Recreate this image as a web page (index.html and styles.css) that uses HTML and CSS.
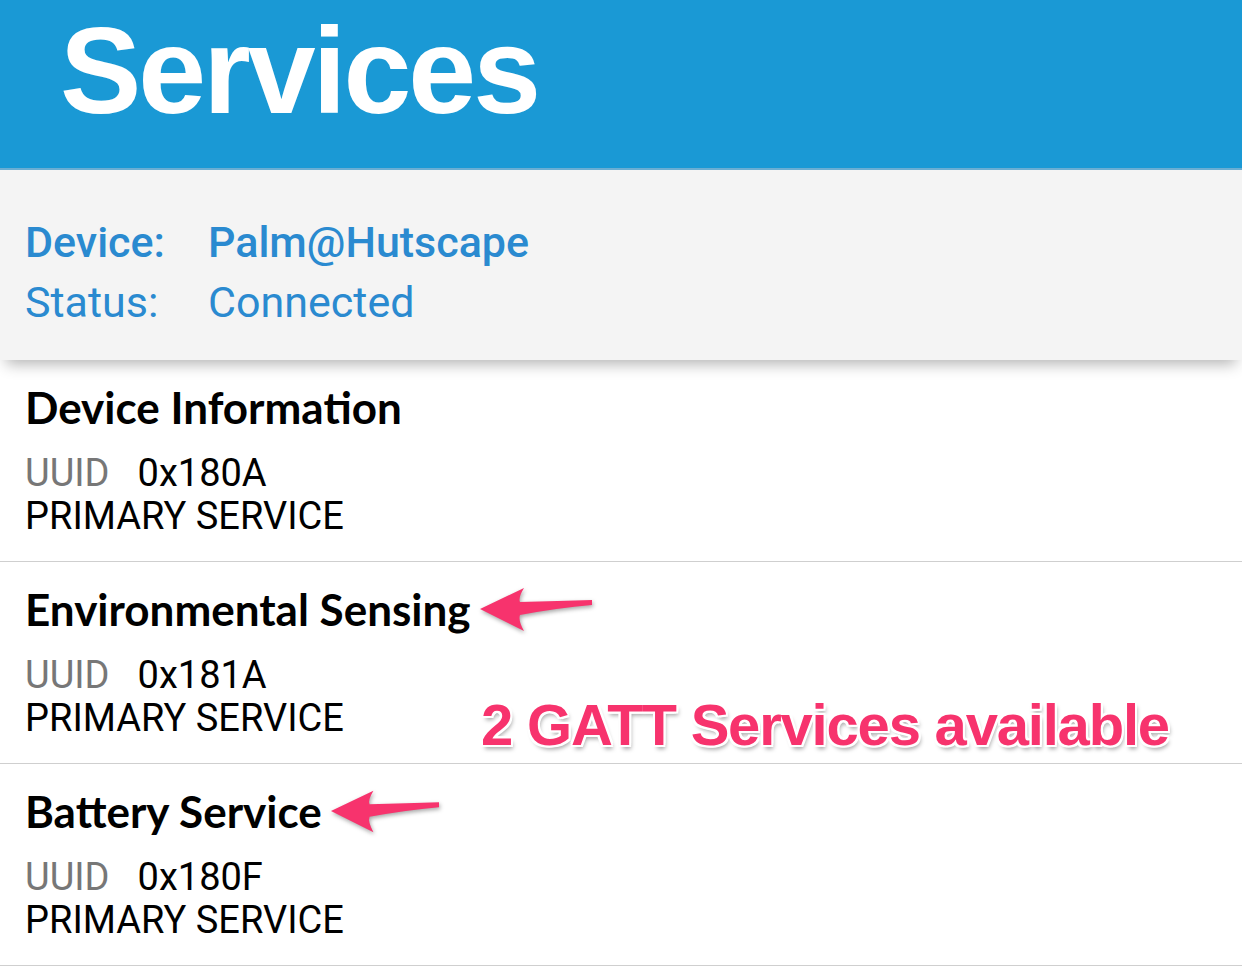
FILE: index.html
```html
<!DOCTYPE html>
<html lang="en">
<head>
<meta charset="utf-8">
<title>Services</title>
<link rel="stylesheet" href="styles.css">
</head>
<body>
<header class="appbar">
  <h1 class="appbar-title">Services</h1>
</header>
<section class="device-panel">
  <div class="device-row">
    <span class="device-label strong">Device:</span>
    <span class="device-value strong">Palm@Hutscape</span>
  </div>
  <div class="device-row">
    <span class="device-label">Status:</span>
    <span class="device-value">Connected</span>
  </div>
</section>
<ul class="services">
  <li class="service">
    <h2 class="service-name">Device Information</h2>
    <p class="service-uuid"><span class="uuid-label">UUID</span><span class="uuid-value">0x180A</span></p>
    <p class="service-type">PRIMARY SERVICE</p>
  </li>
  <li class="service">
    <h2 class="service-name">Environmental Sensing<svg class="arrow" viewBox="0 0 114 46" width="114" height="46"><path d="M1 23 L45 2 Q39 12 41 16 Q80 15 113 14 L113 19 Q78 22 41 29 Q39 34 45 45 Z"/></svg></h2>
    <p class="service-uuid"><span class="uuid-label">UUID</span><span class="uuid-value">0x181A</span></p>
    <p class="service-type">PRIMARY SERVICE</p>
    <span class="annotation">2 GATT Services available</span>
  </li>
  <li class="service">
    <h2 class="service-name">Battery Service<svg class="arrow" viewBox="0 0 114 46" width="110" height="46"><path d="M1 23 L45 2 Q39 12 41 16 Q80 15 113 14 L113 19 Q78 22 41 29 Q39 34 45 45 Z"/></svg></h2>
    <p class="service-uuid"><span class="uuid-label">UUID</span><span class="uuid-value">0x180F</span></p>
    <p class="service-type">PRIMARY SERVICE</p>
  </li>
</ul>
</body>
</html>
```
FILE: styles.css
```css
* { box-sizing: border-box; }
html, body { margin: 0; padding: 0; background: #ffffff; }
body { font-family: Roboto, "Liberation Sans", sans-serif; color: #000; overflow: hidden; }

.appbar {
  height: 170px;
  background: #1a99d5;
  border-bottom: 2px solid #6aaed3;
  padding-left: 60px;
}
.appbar-title {
  margin: 0;
  padding-top: 6px;
  font-family: "Liberation Sans", Arial, sans-serif;
  font-weight: 700;
  font-size: 122px;
  line-height: 130px;
  letter-spacing: -3px;
  color: #ffffff;
}

.device-panel {
  position: relative;
  z-index: 1;
  height: 190px;
  background: #f4f4f4;
  padding: 42px 25px 0;
  box-shadow: 0 10px 14px -6px rgba(0,0,0,0.3);
}
.device-row {
  display: flex;
  font-size: 43px;
  line-height: 60px;
  color: #2a8ad0;
}
.device-label { width: 183px; }
.strong { font-weight: 500; }

.services { list-style: none; margin: 0; padding: 0; }
.service {
  position: relative;
  height: 202px;
  padding: 17px 25px 0;
  border-bottom: 1px solid #cfcfcf;
}
.service-name {
  margin: 0;
  display: flex;
  align-items: center;
  font-family: Lato, "Noto Sans", sans-serif;
  font-weight: 700;
  font-size: 44px;
  line-height: 60px;
  height: 60px;
}
.arrow {
  margin-left: 8px;
  fill: #f7336d;
  filter: drop-shadow(1px 2px 2px rgba(0,0,0,0.35));
}
.service-uuid, .service-type {
  margin: 0;
  font-size: 38px;
  line-height: 43px;
}
.service-uuid { margin-top: 15px; }
.uuid-label { color: #777777; margin-right: 28px; }

.annotation {
  position: absolute;
  left: 481px;
  top: 128px;
  font-family: "Liberation Sans", Arial, sans-serif;
  font-weight: 700;
  font-size: 58px;
  line-height: 70px;
  letter-spacing: -1.2px;
  color: #f7336d;
  text-shadow:
    2px 0 0 #fff, -2px 0 0 #fff, 0 2px 0 #fff, 0 -2px 0 #fff,
    2px 2px 0 #fff, -2px -2px 0 #fff, 2px -2px 0 #fff, -2px 2px 0 #fff,
    2px 4px 4px rgba(0,0,0,0.35);
}
```
